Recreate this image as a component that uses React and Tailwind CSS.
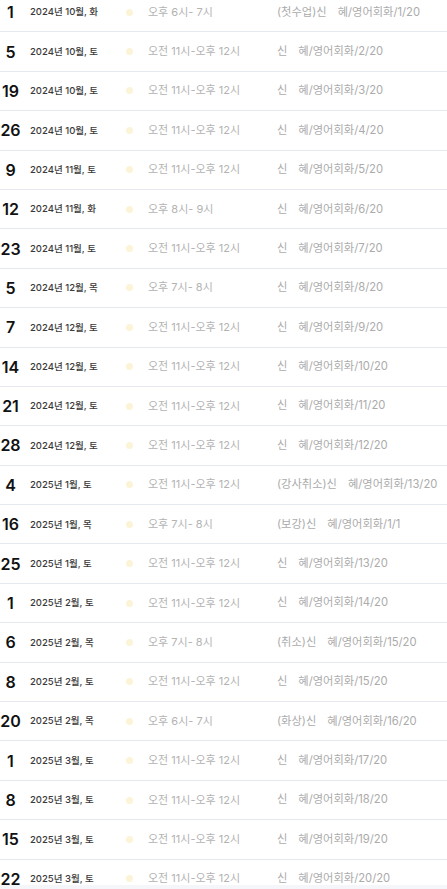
import React from "react";

const S = "11시-오후 12시";
const rows = [
  ["1", "2024년 10월, 화", "오후 6시- 7시", "(첫수업)", "1/20"],
  ["5", "2024년 10월, 토", "오전 " + S, "", "2/20"],
  ["19", "2024년 10월, 토", "오전 " + S, "", "3/20"],
  ["26", "2024년 10월, 토", "오전 " + S, "", "4/20"],
  ["9", "2024년 11월, 토", "오전 " + S, "", "5/20"],
  ["12", "2024년 11월, 화", "오후 8시- 9시", "", "6/20"],
  ["23", "2024년 11월, 토", "오전 " + S, "", "7/20"],
  ["5", "2024년 12월, 목", "오후 7시- 8시", "", "8/20"],
  ["7", "2024년 12월, 토", "오전 " + S, "", "9/20"],
  ["14", "2024년 12월, 토", "오전 " + S, "", "10/20"],
  ["21", "2024년 12월, 토", "오전 " + S, "", "11/20"],
  ["28", "2024년 12월, 토", "오전 " + S, "", "12/20"],
  ["4", "2025년 1월, 토", "오전 " + S, "(강사취소)", "13/20"],
  ["16", "2025년 1월, 목", "오후 7시- 8시", "(보강)", "1/1"],
  ["25", "2025년 1월, 토", "오전 " + S, "", "13/20"],
  ["1", "2025년 2월, 토", "오전 " + S, "", "14/20"],
  ["6", "2025년 2월, 목", "오후 7시- 8시", "(취소)", "15/20"],
  ["8", "2025년 2월, 토", "오전 " + S, "", "15/20"],
  ["20", "2025년 2월, 목", "오후 6시- 7시", "(화상)", "16/20"],
  ["1", "2025년 3월, 토", "오전 " + S, "", "17/20"],
  ["8", "2025년 3월, 토", "오전 " + S, "", "18/20"],
  ["15", "2025년 3월, 토", "오전 " + S, "", "19/20"],
  ["22", "2025년 3월, 토", "오전 " + S, "", "20/20"],
];

export default function App() {
  return (
    <div
      className="w-[447px] h-[889px] overflow-hidden bg-white relative"
      style={{ fontFamily: "Inter, 'Noto Sans CJK KR', sans-serif" }}
    >
      <div className="-mt-[7px]">
        {rows.map((r, i) => (
          <div
            key={i}
            className="flex items-center h-[39.4px] border-b border-[#e6e9ef]"
          >
            <div className="w-[21px] text-center text-[16px] font-semibold text-[#111] leading-none">
              {r[0]}
            </div>
            <div className="ml-[9px] w-[96px] text-[9.5px] font-medium text-[#3a3a3a] leading-none whitespace-nowrap">
              {r[1]}
            </div>
            <div className="w-[22px] flex">
              <div className="w-[7px] h-[7px] rounded-full bg-[#fbf4d6]" />
            </div>
            <div className="w-[129px] text-[11px] text-[#b3b3b3] leading-none whitespace-nowrap">
              {r[2]}
            </div>
            <div className="flex items-center text-[11.25px] text-[#ababab] leading-none whitespace-nowrap">
              <span>{r[3]}신</span>
              <span className="inline-block w-[11px]" />
              <span>혜/영어회화/{r[4]}</span>
            </div>
          </div>
        ))}
      </div>
      <div className="absolute left-0 right-0 bottom-0 h-[4px] bg-[#f4f6fa]" />
    </div>
  );
}
